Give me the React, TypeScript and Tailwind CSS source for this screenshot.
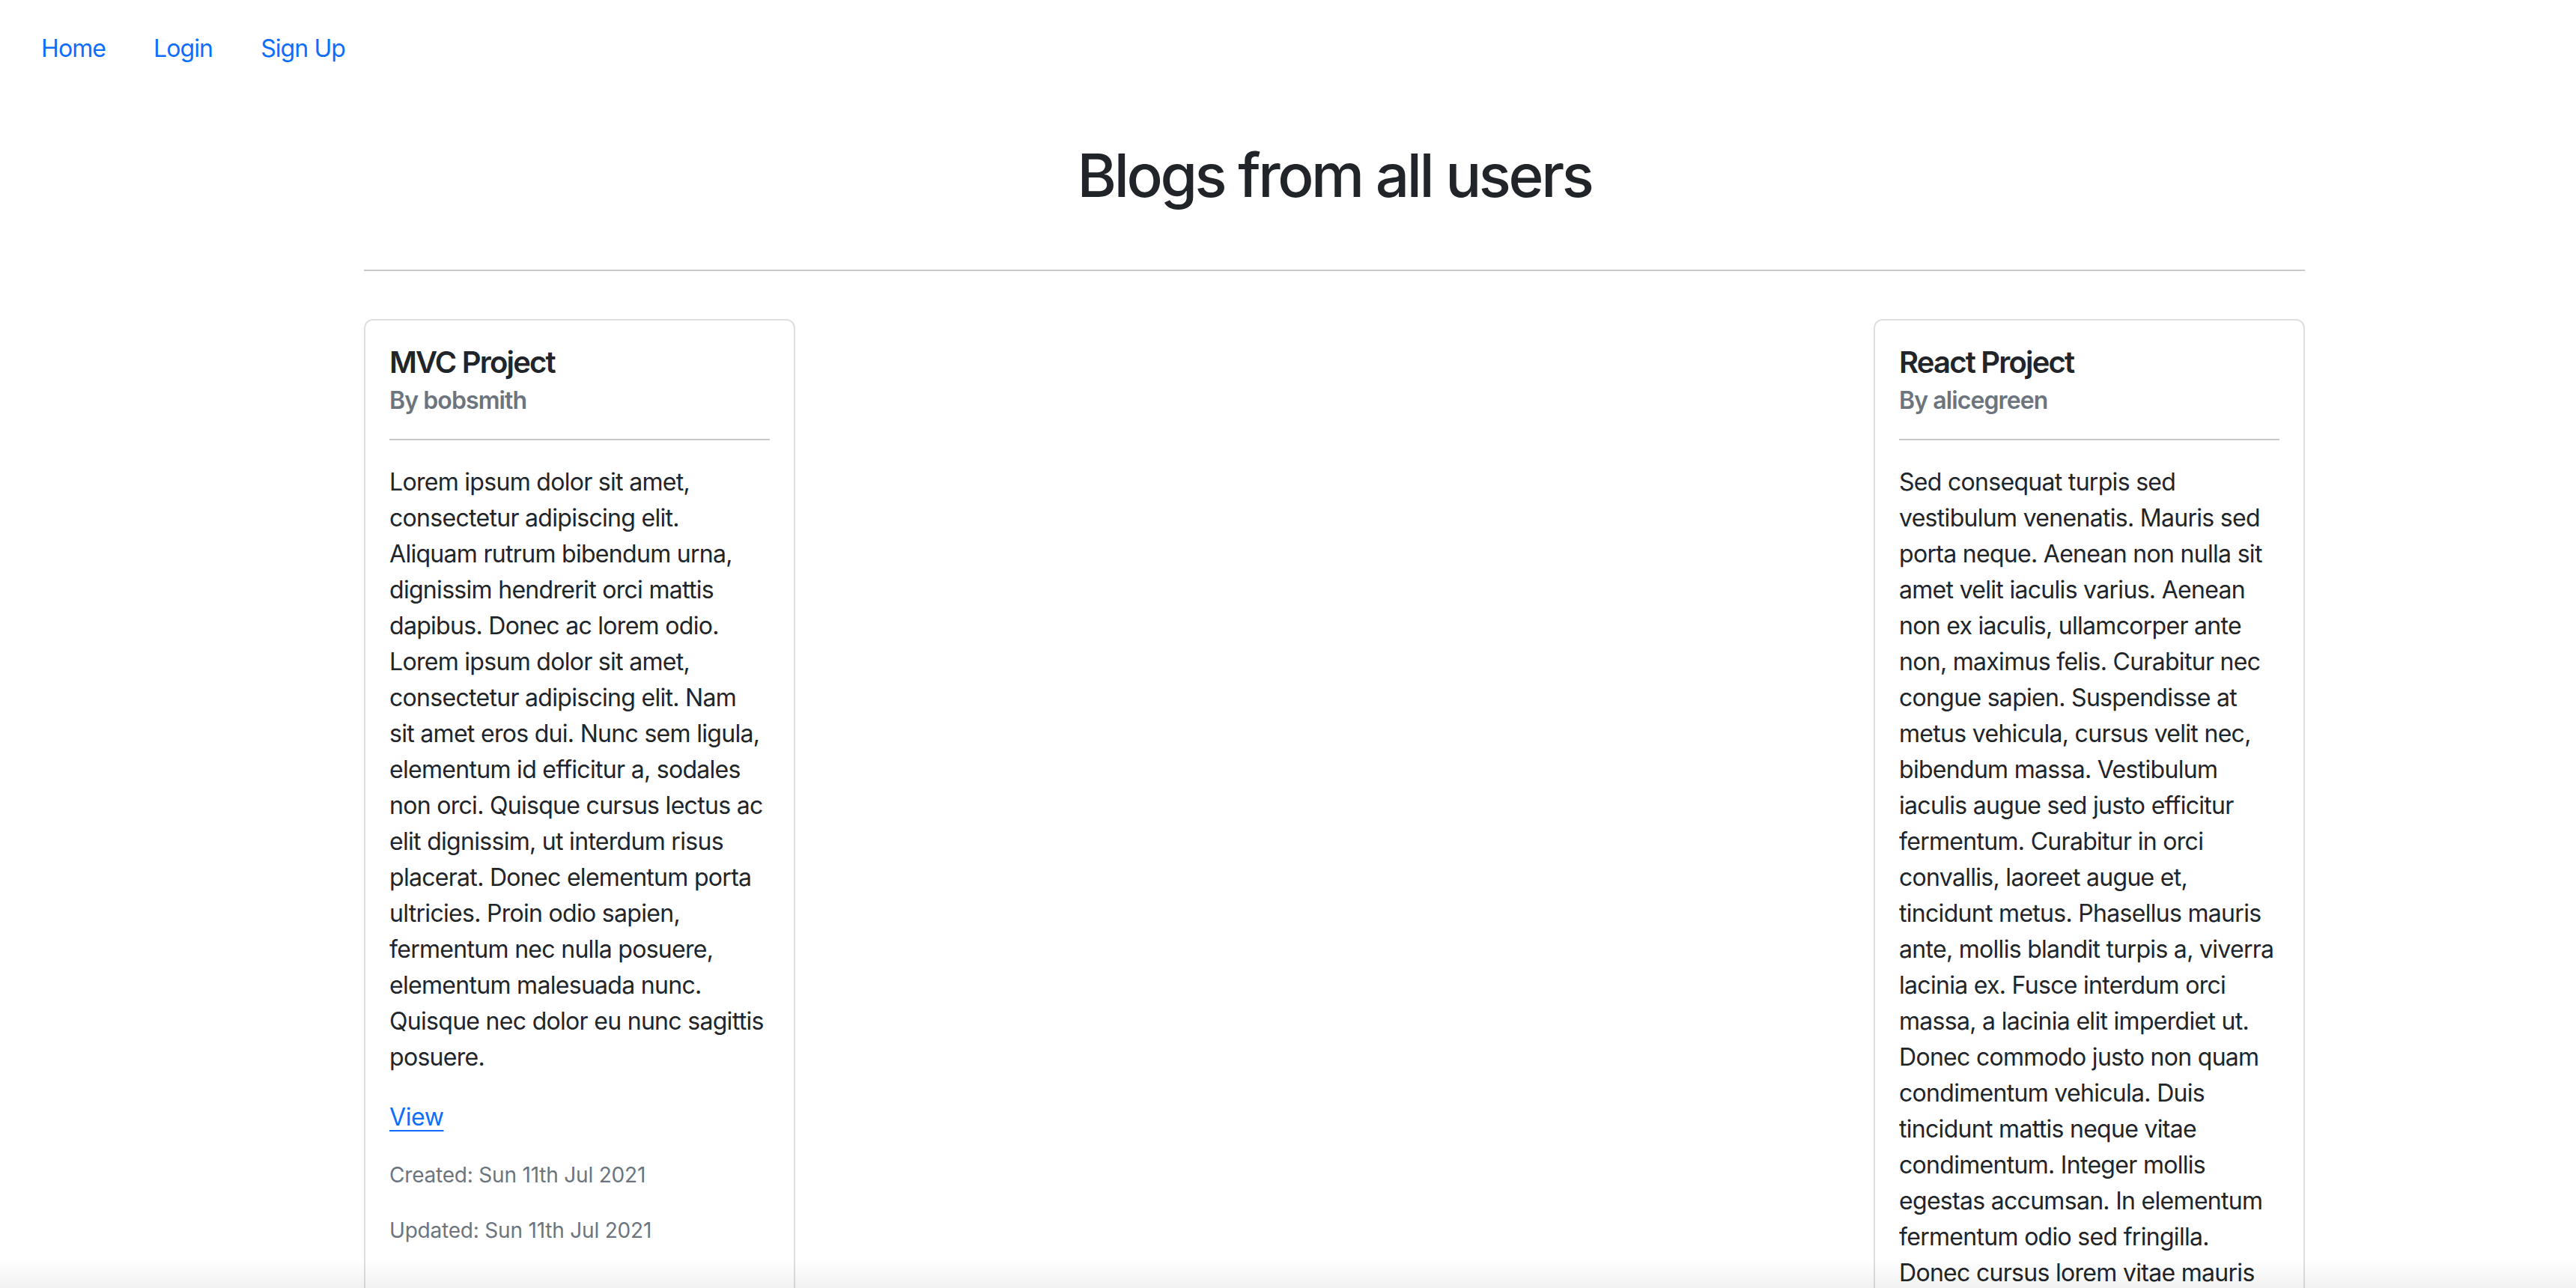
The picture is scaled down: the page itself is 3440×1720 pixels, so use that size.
import React from "react";

const leftLines = [
  "Lorem ipsum dolor sit amet,",
  "consectetur adipiscing elit.",
  "Aliquam rutrum bibendum urna,",
  "dignissim hendrerit orci mattis",
  "dapibus. Donec ac lorem odio.",
  "Lorem ipsum dolor sit amet,",
  "consectetur adipiscing elit. Nam",
  "sit amet eros dui. Nunc sem ligula,",
  "elementum id efficitur a, sodales",
  "non orci. Quisque cursus lectus ac",
  "elit dignissim, ut interdum risus",
  "placerat. Donec elementum porta",
  "ultricies. Proin odio sapien,",
  "fermentum nec nulla posuere,",
  "elementum malesuada nunc.",
  "Quisque nec dolor eu nunc sagittis",
  "posuere.",
];

const rightLines = [
  "Sed consequat turpis sed",
  "vestibulum venenatis. Mauris sed",
  "porta neque. Aenean non nulla sit",
  "amet velit iaculis varius. Aenean",
  "non ex iaculis, ullamcorper ante",
  "non, maximus felis. Curabitur nec",
  "congue sapien. Suspendisse at",
  "metus vehicula, cursus velit nec,",
  "bibendum massa. Vestibulum",
  "iaculis augue sed justo efficitur",
  "fermentum. Curabitur in orci",
  "convallis, laoreet augue et,",
  "tincidunt metus. Phasellus mauris",
  "ante, mollis blandit turpis a, viverra",
  "lacinia ex. Fusce interdum orci",
  "massa, a lacinia elit imperdiet ut.",
  "Donec commodo justo non quam",
  "condimentum vehicula. Duis",
  "tincidunt mattis neque vitae",
  "condimentum. Integer mollis",
  "egestas accumsan. In elementum",
  "fermentum odio sed fringilla.",
  "Donec cursus lorem vitae mauris",
  "pulvinar, nec tincidunt nisl",
  "volutpat. Nulla facilisi.",
];

function Card({ title, author, lines }: { title: string; author: string; lines: string[] }) {
  return (
    <div className="w-[576px] shrink-0 border-2 border-[#dfdfdf] rounded-[12px] bg-white p-[32px]">
      <h5 className="text-[40px] leading-[48px] font-semibold tracking-[-1.8px] text-[#212529] mb-[16px]">{title}</h5>
      <h6 className="text-[32px] leading-[38px] font-semibold tracking-[-0.9px] text-[#6c757d] -mt-[8px]">By {author}</h6>
      <div className="my-[32px] h-[2px] bg-[#c8c9ca]" />
      <p className="text-[32px] leading-[48px] tracking-[-0.7px] text-[#212529] mb-[32px]">
        {lines.map((l, i) => (
          <span key={i} className="block whitespace-nowrap">
            {l}
          </span>
        ))}
      </p>
      <p className="text-[32px] leading-[48px] tracking-[-0.4px] mb-[32px]">
        <a href="#" className="text-[#0d6efd] underline underline-offset-[6px] decoration-[2px]">
          View
        </a>
      </p>
      <p className="text-[28px] leading-[42px] tracking-[-0.2px] text-[#6c757d] mb-[32px]">Created: Sun 11th Jul 2021</p>
      <p className="text-[28px] leading-[42px] tracking-[-0.2px] text-[#6c757d]">Updated: Sun 11th Jul 2021</p>
    </div>
  );
}

export default function App() {
  return (
    <div className="min-h-screen bg-white text-[#212529] font-['Inter','Noto_Sans',sans-serif] pb-[64px]">
      <nav className="flex pl-[23px] pt-[41px]">
        {["Home", "Login", "Sign Up"].map((n) => (
          <a key={n} href="#" className="px-[32px] text-[32px] leading-[48px] tracking-[-0.9px] text-[#0d6efd]">
            {n}
          </a>
        ))}
      </nav>
      <main className="w-[2592px] ml-[486px]">
        <h1 className="mt-[97px] text-center text-[80px] leading-[96px] font-medium tracking-[-3.4px] text-[#212529]">
          Blogs from all users
        </h1>
        <div className="mt-[78px] h-[2px] bg-[#c8c9ca]" />
        <div className="mt-[64px] flex justify-between">
          <Card title="MVC Project" author="bobsmith" lines={leftLines} />
          <Card title="React Project" author="alicegreen" lines={rightLines} />
        </div>
      </main>
      <div className="fixed bottom-0 left-0 right-0 h-[40px] pointer-events-none bg-gradient-to-b from-transparent to-[#0000000d]" />
    </div>
  );
}
